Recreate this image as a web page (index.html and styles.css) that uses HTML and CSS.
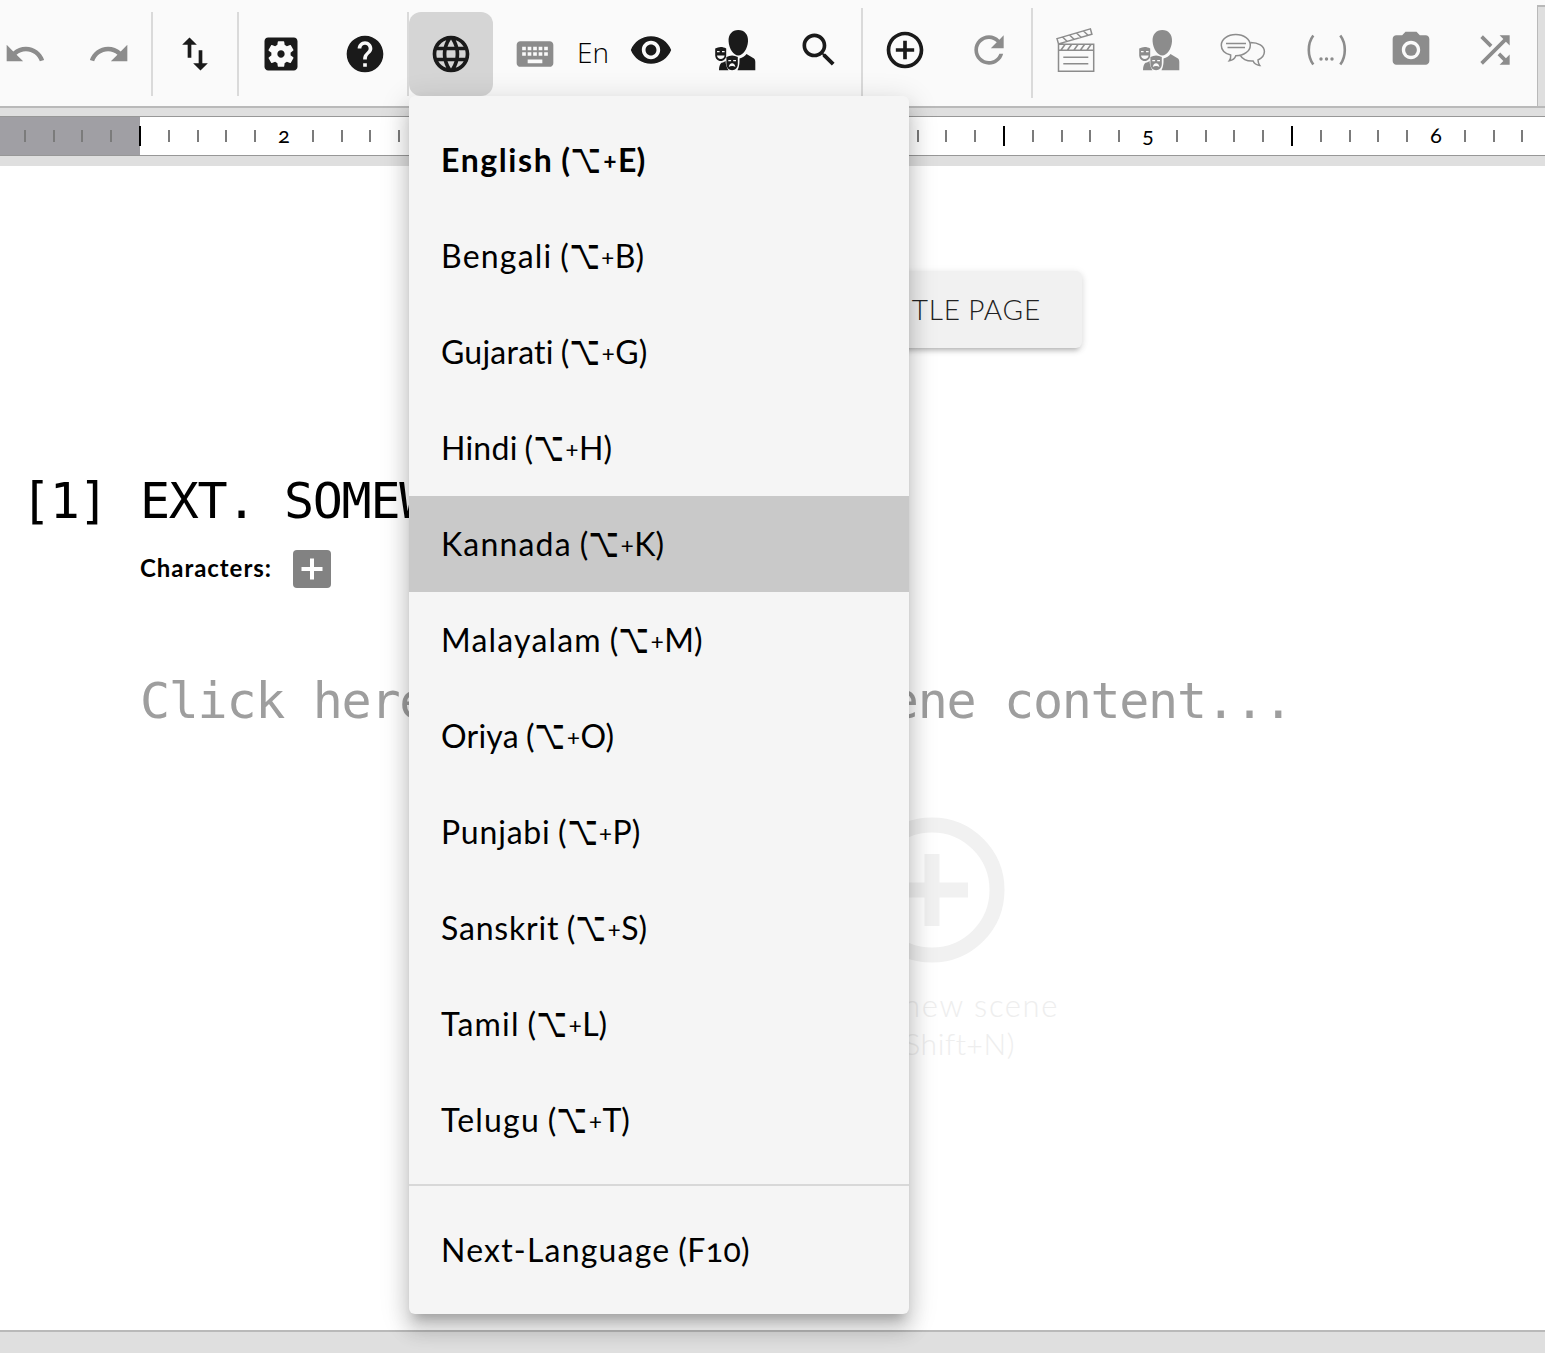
FILE: index.html
```html
<!DOCTYPE html>
<html lang="en">
<head>
<meta charset="utf-8">
<title>Screenplay Editor</title>
<link rel="stylesheet" href="styles.css">
</head>
<body>
<svg class="defs" width="0" height="0">
  <symbol id="cast" viewBox="0 0 44 44">
    <path d="M25.300 2c6.200 0 10.200 4.600 9.700 11.500C34.500 21 30 27.500 25.300 27.500S16.100 21 15.600 13.500C15.100 6.600 19.100 2 25.300 2z"/>
    <path d="M26.500 30.500c3-.5 5.500-2.500 7-4.500l7.500 4.500c1 .8 1.300 2 1.300 3.500v8.200H24.500c1.500-3 2.200-6 2-11.700z"/>
    <path d="M6 42.200c0-3.500.8-6.200 2.500-7.500 2-.4 3.300-1 4-2 .2 3.500 1 6.500 3 9.500z"/>
    <path d="M2.200 20.500c3.500-2 7.600-2 11 0v6.500c0 3.500-2.300 6-5.500 6s-5.500-2.500-5.500-6z"/>
    <path d="M13.400 29c3.700-2 7.800-2 11.400 0v7c0 3.700-2.500 6.200-5.700 6.200s-5.700-2.500-5.700-6.200z"/>
    <path class="cut" d="M4 23h2.600v1.300H4zM9 23h2.600v1.300H9zM4 27.500h7.600c-.2 2.200-1.800 3.500-3.800 3.500S4.200 29.700 4 27.500zM15.300 32h2.800v1.300h-2.800zM20.200 32H23v1.300h-2.800zM15.800 39c.3-2.500 1.600-3.800 3.300-3.800s3 1.300 3.300 3.800c-1.800-1.300-4.800-1.300-6.600 0z"/>
  </symbol>
</svg>

<header class="toolbar">
  <div class="tools">
    <button class="tool off"><svg viewBox="0 0 24 24"><path d="M12.500 8c-2.650 0-5.050.99-6.900 2.600L2 7v9h9l-3.620-3.620c1.390-1.160 3.160-1.880 5.120-1.880 3.540 0 6.550 2.310 7.600 5.500l2.370-.78C21.080 11.030 17.150 8 12.500 8z"/></svg></button>
    <button class="tool off"><svg viewBox="0 0 24 24"><path d="M18.400 10.600C16.550 8.990 14.150 8 11.500 8c-4.650 0-8.580 3.030-9.960 7.220L3.900 16c1.050-3.190 4.050-5.500 7.600-5.500 1.950 0 3.730.72 5.120 1.880L13 16h9V7l-3.600 3.600z"/></svg></button>
    <i class="sep"></i>
    <button class="tool"><svg viewBox="0 0 24 24"><path d="M9 3L5 6.990h3V14h2V6.990h3L9 3zm7 14.010V10h-2v7.010h-3L15 21l4-3.990h-3z"/></svg></button>
    <i class="sep"></i>
    <button class="tool"><svg viewBox="0 0 24 24"><path d="M12 10c-1.100 0-2 .9-2 2s.9 2 2 2 2-.9 2-2-.9-2-2-2zm7-7H5c-1.110 0-2 .9-2 2v14c0 1.100.89 2 2 2h14c1.110 0 2-.9 2-2V5c0-1.100-.89-2-2-2zm-1.750 9c0 .23-.02.46-.05.68l1.480 1.160c.13.11.17.3.08.45l-1.400 2.420c-.09.15-.27.21-.43.15l-1.740-.7c-.36.28-.76.51-1.180.69l-.26 1.850c-.03.17-.18.3-.35.3h-2.800c-.17 0-.32-.13-.35-.29l-.26-1.850c-.43-.18-.82-.41-1.180-.69l-1.740.7c-.16.06-.34 0-.43-.15l-1.400-2.420c-.09-.15-.05-.34.08-.45l1.480-1.160c-.03-.23-.05-.46-.05-.69 0-.23.02-.46.05-.68l-1.480-1.160c-.13-.11-.17-.3-.08-.45l1.400-2.420c.09-.15.27-.21.43-.15l1.740.7c.36-.28.76-.51 1.180-.69l.26-1.850c.03-.17.18-.3.35-.3h2.800c.17 0 .32.13.35.29l.26 1.850c.43.18.82.41 1.180.69l1.740-.7c.16-.06.34 0 .43.15l1.400 2.420c.09.15.05.34-.08.45l-1.480 1.160c.03.23.05.46.05.69z"/></svg></button>
    <button class="tool"><svg viewBox="0 0 24 24"><path d="M12 2C6.480 2 2 6.480 2 12s4.480 10 10 10 10-4.480 10-10S17.520 2 12 2zm1 17h-2v-2h2v2zm2.070-7.750l-.9.920C13.450 12.900 13 13.500 13 15h-2v-.5c0-1.100.45-2.100 1.170-2.830l1.240-1.260c.37-.36.59-.86.59-1.410 0-1.100-.9-2-2-2s-2 .9-2 2H8c0-2.210 1.790-4 4-4s4 1.790 4 4c0 .88-.36 1.680-.93 2.250z"/></svg></button>
    <i class="sep"></i>
    <button class="tool active"><svg viewBox="0 0 24 24"><path d="M11.990 2C6.470 2 2 6.480 2 12s4.470 10 9.990 10C17.520 22 22 17.520 22 12S17.520 2 11.990 2zm6.930 6h-2.950c-.32-1.250-.78-2.450-1.380-3.560 1.840.63 3.370 1.910 4.330 3.560zM12 4.040c.83 1.200 1.480 2.530 1.910 3.960h-3.820c.43-1.430 1.080-2.760 1.910-3.960zM4.260 14C4.100 13.360 4 12.690 4 12s.1-1.360.26-2h3.380c-.08.66-.14 1.320-.14 2s.06 1.340.14 2H4.260zm.82 2h2.950c.32 1.250.78 2.450 1.380 3.560-1.840-.63-3.370-1.900-4.330-3.560zm2.950-8H5.080c.96-1.660 2.490-2.930 4.330-3.560C8.810 5.550 8.350 6.750 8.030 8zM12 19.960c-.83-1.200-1.480-2.530-1.910-3.960h3.820c-.43 1.430-1.080 2.760-1.910 3.960zM14.340 14H9.660c-.09-.66-.16-1.320-.16-2s.07-1.350.16-2h4.680c.09.65.16 1.320.16 2s-.07 1.340-.16 2zm.25 5.560c.6-1.110 1.060-2.310 1.380-3.560h2.950c-.96 1.650-2.490 2.930-4.330 3.560zM16.360 14c.08-.66.14-1.320.14-2s-.06-1.340-.14-2h3.380c.16.64.26 1.310.26 2s-.1 1.360-.26 2h-3.380z"/></svg></button>
    <button class="tool off"><svg viewBox="0 0 24 24"><path d="M20 5H4c-1.100 0-1.990.9-1.990 2L2 17c0 1.100.9 2 2 2h16c1.100 0 2-.9 2-2V7c0-1.100-.9-2-2-2zm-9 3h2v2h-2V8zm0 3h2v2h-2v-2zM8 8h2v2H8V8zm0 3h2v2H8v-2zm-1 2H5v-2h2v2zm0-3H5V8h2v2zm9 7H8v-2h8v2zm0-4h-2v-2h2v2zm0-3h-2V8h2v2zm3 3h-2v-2h2v2zm0-3h-2V8h2v2z"/></svg></button>
    <span class="lang">En</span>
  </div>
  <div class="tools editing">
    <button class="tool"><svg viewBox="0 0 24 24"><path d="M12 4.500C7 4.500 2.730 7.610 1 12c1.730 4.390 6 7.500 11 7.500s9.270-3.110 11-7.500c-1.730-4.390-6-7.500-11-7.500zM12 17c-2.760 0-5-2.240-5-5s2.240-5 5-5 5 2.240 5 5-2.240 5-5 5zm0-8c-1.660 0-3 1.340-3 3s1.340 3 3 3 3-1.340 3-3-1.340-3-3-3z"/></svg></button>
    <button class="tool"><svg><use href="#cast"/></svg></button>
    <button class="tool"><svg viewBox="0 0 24 24"><path d="M15.500 14h-.79l-.28-.27C15.410 12.590 16 11.110 16 9.500 16 5.910 13.090 3 9.500 3S3 5.910 3 9.500 5.910 16 9.500 16c1.610 0 3.090-.59 4.230-1.570l.27.28v.79l5 4.990L20.490 19l-4.990-5zm-6 0C7.010 14 5 11.990 5 9.500S7.010 5 9.500 5 14 7.010 14 9.500 11.990 14 9.500 14z"/></svg></button>
    <i class="sep"></i>
    <button class="tool"><svg viewBox="0 0 24 24"><path d="M13 7h-2v4H7v2h4v4h2v-4h4v-2h-4V7zm-1-5C6.480 2 2 6.480 2 12s4.480 10 10 10 10-4.480 10-10S17.520 2 12 2zm0 18c-4.410 0-8-3.590-8-8s3.590-8 8-8 8 3.590 8 8-3.590 8-8 8z"/></svg></button>
    <button class="tool off"><svg viewBox="0 0 24 24"><path d="M17.650 6.350C16.200 4.900 14.210 4 12 4c-4.420 0-7.990 3.580-7.990 8s3.570 8 7.990 8c3.730 0 6.840-2.550 7.730-6h-2.080c-.82 2.330-3.040 4-5.650 4-3.310 0-6-2.690-6-6s2.690-6 6-6c1.660 0 3.140.69 4.220 1.780L13 11h7V4l-2.350 2.350z"/></svg></button>
    <i class="sep"></i>
    <button class="tool off"><svg class="line" viewBox="0 0 44 44"><path d="M5.500 16.200h35.200v27H5.500zM5.500 22.300h35.200M4 10.600L37.400.9l1.500 5.300L5.500 15.900zM8 22l4-5.500M14.500 22l4-5.500M21 22l4-5.500M27.500 22l4-5.500M34 22l4-5.500M9.500 9l4.500 4.300M16.500 7l4.500 4.300M23.500 5l4.500 4.300M30.500 3l4.500 4.300M10.300 29.300h25M10.300 35.700h25"/></svg></button>
    <button class="tool off"><svg><use href="#cast"/></svg></button>
    <button class="tool off"><svg class="line" viewBox="0 0 44 44"><path d="M14.800 6.600c8.100 0 14.500 4.700 14.500 10.600s-6.400 10.600-14.500 10.600c-1 3-3.500 4.500-6.500 5 1.300-1.700 1.600-3.500 1.400-5.800C4 25.500.3 21.700.3 17.200.3 11.300 6.700 6.600 14.800 6.600z M29.700 14.400c7.500 0 13.700 3.800 13.700 9.200 0 3.700-2.600 6.700-6.400 8.400.1 2 .4 3.700 1.700 5.400-2.800-.3-5.500-1.700-6.600-4.400-6.500.3-10.500-1.500-12.800-5.600M5 15.500h20M6.500 19.500h17.500"/></svg></button>
    <button class="tool off"><svg class="paren" viewBox="0 0 44 44"><path d="M8.300 7.500c-6 8-6 21 0 29M35.300 7.500c6 8 6 21 0 29"/><circle cx="16" cy="31" r="1.700"/><circle cx="21.500" cy="31" r="1.700"/><circle cx="27" cy="31" r="1.700"/></svg></button>
    <button class="tool off"><svg viewBox="0 0 24 24"><circle cx="12" cy="12" r="3.200"/><path d="M9 2L7.170 4H4c-1.100 0-2 .9-2 2v12c0 1.100.9 2 2 2h16c1.100 0 2-.9 2-2V6c0-1.100-.9-2-2-2h-3.170L15 2H9zm3 15c-2.760 0-5-2.240-5-5s2.240-5 5-5 5 2.240 5 5-2.240 5-5 5z"/></svg></button>
    <button class="tool off"><svg viewBox="0 0 24 24"><path d="M10.590 9.170L5.410 4 4 5.410l5.170 5.170 1.420-1.410zM14.500 4l2.040 2.040L4 18.590 5.410 20 17.960 7.460 20 9.500V4h-5.500zm.33 9.410l-1.410 1.410 3.130 3.130L14.500 20H20v-5.500l-2.040 2.040-3.130-3.130z"/></svg></button>
  </div>
  <div class="edge"></div>
</header>

<div class="ruler">
  <div class="margin"></div>
  <div class="inches">
    <div class="inch"><i class="major"></i><i></i><i></i><i></i><i></i><b></b><i></i><i></i><i></i><i></i></div>
    <div class="inch"><i class="major"></i><i></i><i></i><i></i><i></i><b>2</b><i></i><i></i><i></i><i></i></div>
    <div class="inch"><i class="major"></i><i></i><i></i><i></i><i></i><b>3</b><i></i><i></i><i></i><i></i></div>
    <div class="inch"><i class="major"></i><i></i><i></i><i></i><i></i><b>4</b><i></i><i></i><i></i><i></i></div>
    <div class="inch"><i class="major"></i><i></i><i></i><i></i><i></i><b>5</b><i></i><i></i><i></i><i></i></div>
    <div class="inch"><i class="major"></i><i></i><i></i><i></i><i></i><b>6</b><i></i><i></i><i></i><i></i></div>
  </div>
</div>

<main class="page">
  <button class="title-page">TITLE PAGE</button>
  <div class="heading"><span class="number">[1]</span><span>EXT. SOMEWHERE</span></div>
  <div class="cast-row"><span>Characters:</span><button class="add"><svg viewBox="0 0 38 38"><path d="M19 8.500v21M8.500 19h21"/></svg></button></div>
  <p class="placeholder">Click here to type your scene content...</p>
  <div class="new-scene">
    <svg viewBox="0 0 146 146"><circle cx="73" cy="73" r="65"/><path d="M73 37v72M37 73h72"/></svg>
    <div class="l1">Add new scene</div>
    <div class="l2">(Ctrl+Shift+N)</div>
  </div>
</main>
<footer class="bottom"></footer>

<div class="menu">
  <div class="item current">English <span class="keys">(<span class="opt">⌥</span><span class="plus">+</span>E)</span></div>
  <div class="item">Bengali <span class="keys">(<span class="opt">⌥</span><span class="plus">+</span>B)</span></div>
  <div class="item tight">Gujarati <span class="keys">(<span class="opt">⌥</span><span class="plus">+</span>G)</span></div>
  <div class="item tight">Hindi <span class="keys">(<span class="opt">⌥</span><span class="plus">+</span>H)</span></div>
  <div class="item hover">Kannada <span class="keys">(<span class="opt">⌥</span><span class="plus">+</span>K)</span></div>
  <div class="item">Malayalam <span class="keys">(<span class="opt">⌥</span><span class="plus">+</span>M)</span></div>
  <div class="item tight">Oriya <span class="keys">(<span class="opt">⌥</span><span class="plus">+</span>O)</span></div>
  <div class="item snug">Punjabi <span class="keys">(<span class="opt">⌥</span><span class="plus">+</span>P)</span></div>
  <div class="item snug">Sanskrit <span class="keys">(<span class="opt">⌥</span><span class="plus">+</span>S)</span></div>
  <div class="item">Tamil <span class="keys">(<span class="opt">⌥</span><span class="plus">+</span>L)</span></div>
  <div class="item">Telugu <span class="keys">(<span class="opt">⌥</span><span class="plus">+</span>T)</span></div>
  <div class="rule"></div>
  <div class="item next">Next-Language <span class="keys">(F10)</span></div>
</div>
</body>
</html>
```
FILE: styles.css
```css
* { box-sizing: border-box; }
body {
  margin: 0;
  height: 1353px;
  display: flex;
  flex-direction: column;
  overflow: hidden;
  position: relative;
  background: #dfdfdf;
  color: #000;
  font-family: Lato, "Open Sans", sans-serif;
  font-variant-numeric: oldstyle-nums;
}
button { border: 0; padding: 0; background: none; font: inherit; }
.defs { position: absolute; }

.toolbar {
  flex: none;
  height: 108px;
  display: flex;
  background: #fafafa;
  border-bottom: 2px solid #b9b9b9;
}
.tools { display: flex; flex: none; height: 84px; margin: 12px 0 0 -17px; }
.tools.editing { height: 90px; margin: 8px 0 0; }
.tool {
  flex: none;
  width: 84px;
  height: 84px;
  display: flex;
  align-items: center;
  justify-content: center;
  border-radius: 12px;
  color: #1a1a1a;
}
.tool svg { width: 44px; height: 44px; fill: currentColor; overflow: visible; }
.tool .line { fill: none; stroke: currentColor; stroke-width: 1.5; }
.paren path { fill: none; stroke: currentColor; stroke-width: 2.6; }
.tool.off { color: #8c8c8c; }
.tool.active { background: #d5d5d5; }
.cut { fill: #fafafa; }
.sep { flex: none; width: 2px; background: #dadada; }
.lang {
  width: 32px;
  line-height: 80px;
  font-family: "Open Sans", sans-serif;
  font-weight: 300;
  font-size: 28px;
  white-space: nowrap;
}
.edge {
  flex: 1;
  margin-top: 5px;
  background: #dfdfdf;
  border: solid #b9b9b9;
  border-width: 2px 0 0 1px;
}

.ruler {
  flex: none;
  display: flex;
  height: 40px;
  margin: 8px 0 10px;
  overflow: hidden;
  background: #fff;
  border: solid #979797;
  border-width: 1px 0;
}
.margin { flex: none; width: 140px; background: #a09fa4; }
.inches { flex: none; display: flex; margin-left: -288px; }
.inch {
  width: 288px;
  display: grid;
  grid-template-columns: repeat(10, 28.8px);
  align-items: center;
}
.inch i { width: 2px; height: 12px; margin-left: -1px; background: #7b7b7b; }
.inch .major { height: 20px; background: #000; }
.inch b { width: 20px; margin-left: -10px; text-align: center; font-weight: 400; font-size: 22px; line-height: 36px; padding-bottom: 2px; }

.page {
  flex: 1;
  display: flex;
  flex-direction: column;
  align-items: flex-start;
  background: #fff;
}
.title-page {
  width: 300px;
  height: 77px;
  margin: 105px 0 0 782px;
  padding: 0 41px 2px 0;
  text-align: right;
  border-radius: 6px;
  background: #f1f1f1;
  color: #222;
  font-size: 28px;
  font-weight: 300;
  letter-spacing: 0.8px;
  word-spacing: -1px;
  box-shadow: 0 6px 4px -4px rgba(0,0,0,.16), 0 3px 6px rgba(0,0,0,.12), 0 1px 10px rgba(0,0,0,.06);
}
.heading, .placeholder {
  font-family: "DejaVu Sans Mono", monospace;
  font-size: 50px;
  letter-spacing: -1.3px;
  line-height: 60px;
  white-space: pre;
}
.heading { display: flex; margin-top: 123px; }
.number { width: 119px; margin-left: 21px; }
.cast-row {
  display: flex;
  align-items: center;
  gap: 22px;
  height: 38px;
  margin: 19px 0 0 140px;
  font-size: 24px;
  font-weight: 700;
  letter-spacing: 0.95px;
}
.cast-row span { width: 131px; padding-bottom: 4px; white-space: nowrap; }
.add { width: 38px; height: 38px; border-radius: 4px; background: #828282; }
.add svg { display: block; stroke: #fff; stroke-width: 4; }
.placeholder { margin: 83px 0 0 140px; color: #9e9e9e; }
.new-scene {
  width: 300px;
  margin: 86px 0 0 782px;
  display: flex;
  flex-direction: column;
  align-items: center;
  color: #eee;
  font-size: 30px;
  font-weight: 300;
  line-height: 38px;
}
.new-scene svg { width: 146px; height: 146px; margin-bottom: 23px; fill: none; stroke: #f1f1f1; stroke-width: 15; }
.new-scene div { align-self: flex-end; white-space: nowrap; }
.new-scene .l1 { margin-right: 23px; font-size: 31px; letter-spacing: 1.6px; }
.new-scene .l2 { margin-right: 67px; letter-spacing: 0.6px; }
.bottom { flex: none; height: 23px; border-top: 2px solid #b9b9b9; background: #dfdfdf; }

.menu {
  position: absolute;
  left: 409px;
  top: 96px;
  width: 500px;
  padding: 16px 0;
  border-radius: 6px;
  background: #f5f5f5;
  box-shadow: 0 10px 10px -6px rgba(0,0,0,.2), 0 16px 20px 2px rgba(0,0,0,.14), 0 6px 28px 4px rgba(0,0,0,.12);
}
.item {
  height: 96px;
  padding-left: 32px;
  line-height: 95px;
  font-size: 32px;
  letter-spacing: 1.2px;
  word-spacing: -1.5px;
  white-space: nowrap;
}
.item.tight { letter-spacing: 0.25px; }
.item.snug { letter-spacing: 0.8px; }
.item.current { font-weight: 700; letter-spacing: 1.6px; }
.item.hover { background: #c9c9c9; }
.item .keys { letter-spacing: 0; }
.item.next .keys { letter-spacing: 0.4px; }
.opt {
  display: inline-block;
  width: 32px;
  font-family: "DejaVu Sans", sans-serif;
  font-weight: 400;
  font-size: 32px;
  line-height: 1;
  text-indent: -3px;
  transform: translateY(-2px) scale(.82, 1.3);
}
.plus {
  display: inline-block;
  width: 14px;
  font-size: 24px;
  line-height: 1;
  text-align: center;
  transform: translateY(-3px);
}
.current .plus { width: 16px; }
.rule { height: 2px; margin: 16px 0; background: #d8d8d8; }
```
